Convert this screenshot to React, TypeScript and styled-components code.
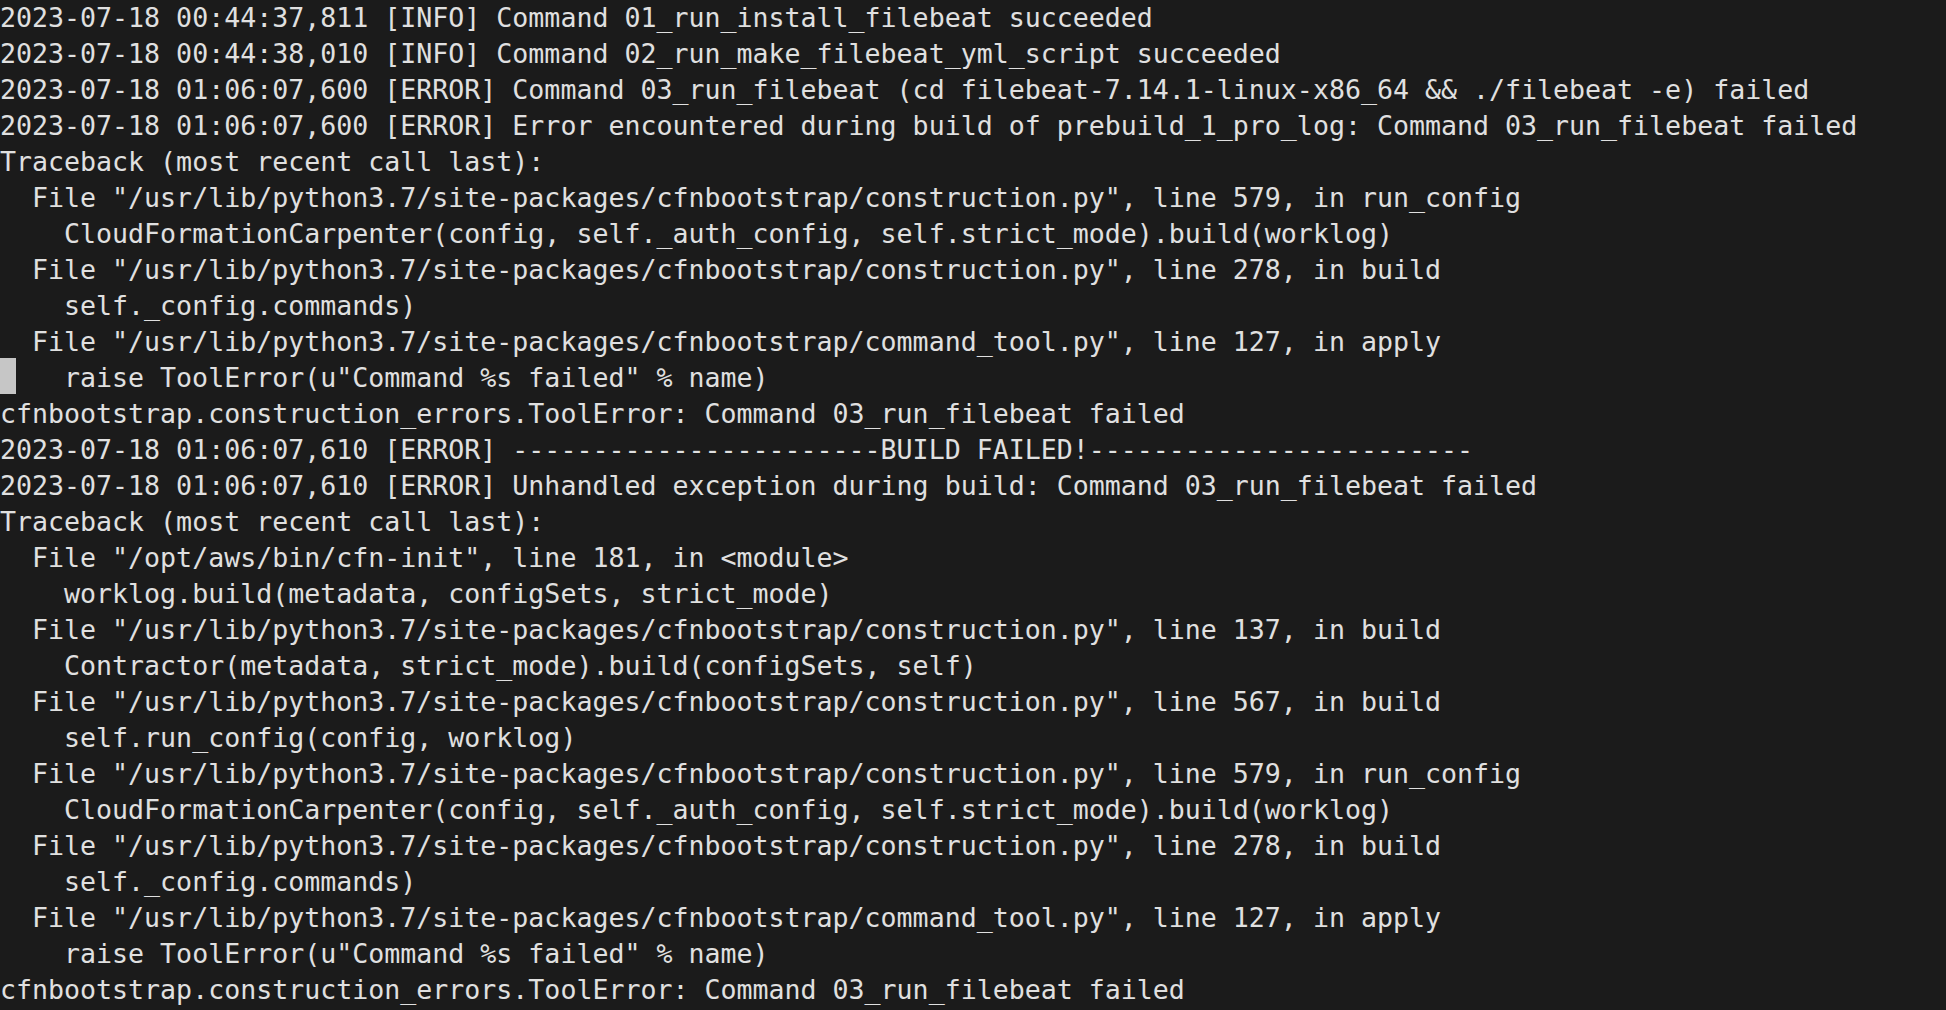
import React from "react";
import styled, { createGlobalStyle } from "styled-components";

const Global = createGlobalStyle`
  html, body {
    margin: 0;
    padding: 0;
    background: #1b1b1b;
    overflow: hidden;
  }
  #root {
    min-height: 100vh;
    background: #1b1b1b;
  }
`;

const Terminal = styled.pre`
  margin: 0;
  padding: 0;
  width: 1946px;
  height: 1010px;
  box-sizing: border-box;
  background: #1b1b1b;
  color: #e0e0e0;
  font-family: "DejaVu Sans Mono", "Liberation Mono", monospace;
  font-size: 26.6px;
  line-height: 36px;
  white-space: pre;
  overflow: hidden;
`;

const Line = styled.div`
  height: 36px;
`;

const Cursor = styled.span`
  display: inline-block;
  position: relative;
  top: -2px;
  width: 16px;
  height: 36px;
  vertical-align: top;
  background: #c6c6c6;
`;

const CP = `File "/usr/lib/python3.7/site-packages/cfnbootstrap/`;

const lines: string[] = [
  "2023-07-18 00:44:37,811 [INFO] Command 01_run_install_filebeat succeeded",
  "2023-07-18 00:44:38,010 [INFO] Command 02_run_make_filebeat_yml_script succeeded",
  "2023-07-18 01:06:07,600 [ERROR] Command 03_run_filebeat (cd filebeat-7.14.1-linux-x86_64 && ./filebeat -e) failed",
  "2023-07-18 01:06:07,600 [ERROR] Error encountered during build of prebuild_1_pro_log: Command 03_run_filebeat failed",
  "Traceback (most recent call last):",
  `  ${CP}construction.py", line 579, in run_config`,
  "    CloudFormationCarpenter(config, self._auth_config, self.strict_mode).build(worklog)",
  `  ${CP}construction.py", line 278, in build`,
  "    self._config.commands)",
  `  ${CP}command_tool.py", line 127, in apply`,
  "CURSOR",
  "cfnbootstrap.construction_errors.ToolError: Command 03_run_filebeat failed",
  "2023-07-18 01:06:07,610 [ERROR] " + "-".repeat(23) + "BUILD FAILED!" + "-".repeat(24),
  "2023-07-18 01:06:07,610 [ERROR] Unhandled exception during build: Command 03_run_filebeat failed",
  "Traceback (most recent call last):",
  `  File "/opt/aws/bin/cfn-init", line 181, in <module>`,
  "    worklog.build(metadata, configSets, strict_mode)",
  `  ${CP}construction.py", line 137, in build`,
  "    Contractor(metadata, strict_mode).build(configSets, self)",
  `  ${CP}construction.py", line 567, in build`,
  "    self.run_config(config, worklog)",
  `  ${CP}construction.py", line 579, in run_config`,
  "    CloudFormationCarpenter(config, self._auth_config, self.strict_mode).build(worklog)",
  `  ${CP}construction.py", line 278, in build`,
  "    self._config.commands)",
  `  ${CP}command_tool.py", line 127, in apply`,
  `    raise ToolError(u"Command %s failed" % name)`,
  "cfnbootstrap.construction_errors.ToolError: Command 03_run_filebeat failed",
];

export default function App() {
  return (
    <>
      <Global />
      <Terminal>
        {lines.map((l, i) =>
          l === "CURSOR" ? (
            <Line key={i}>
              <Cursor />
              {`   raise ToolError(u"Command %s failed" % name)`}
            </Line>
          ) : (
            <Line key={i}>{l}</Line>
          )
        )}
      </Terminal>
    </>
  );
}
